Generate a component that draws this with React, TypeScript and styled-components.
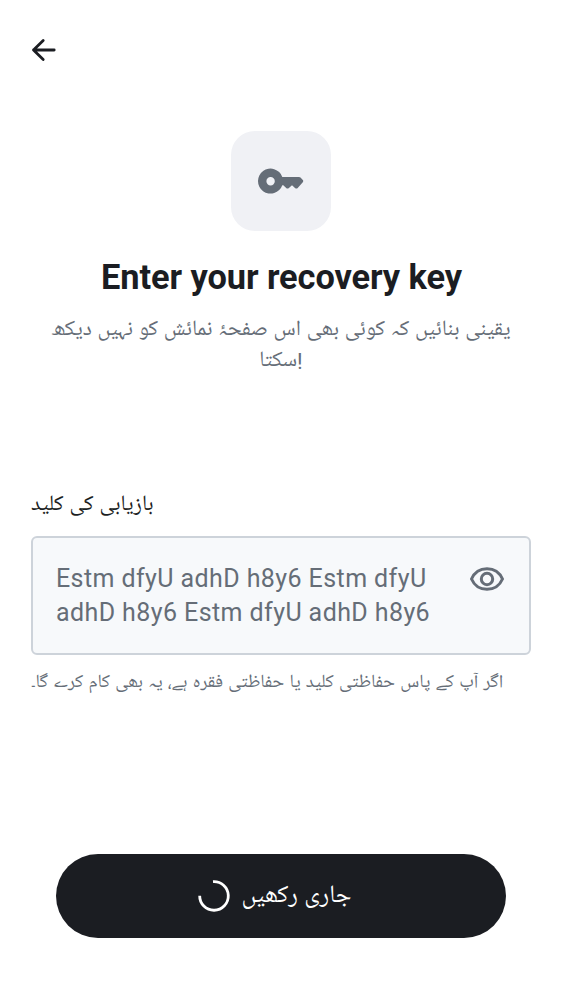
import React from 'react';
import styled, { createGlobalStyle } from 'styled-components';

const urduFont = 'Roboto, "Noto Naskh Arabic UI", "Noto Naskh Arabic", "Noto Sans Arabic", "DejaVu Sans", sans-serif';

const Global = createGlobalStyle`
  * { box-sizing: border-box; }
  body { margin: 0; background: #fff; font-family: ${urduFont}; color: #1b1d22; }
  h1, p { margin: 0; }
`;
const Screen = styled.main`
  width: 562px; height: 1000px; display: flex; flex-direction: column; overflow: hidden; padding: 33px 31px 0;
`;
const Back = styled.button`
  border: 0; background: none; padding: 0; width: 33px; height: 33px; display: flex; margin-left: -4px;
`;
const Header = styled.header`
  display: flex; flex-direction: column; align-items: center; margin-top: 65px; height: 360px;
`;
const KeyTile = styled.div`
  width: 100px; height: 100px; border-radius: 24px; background: #f0f1f5; display: grid; place-items: center;
`;
const Title = styled.h1`
  font-size: 34.375px; line-height: 44px; letter-spacing: -0.08px; margin-top: 24px; padding-left: 1px; font-weight: 700; white-space: nowrap;
`;
const Subtitle = styled.p`
  font-size: 21.875px; word-spacing: 0.35px; line-height: 31.25px; margin-top: 16px; color: #656d77; text-align: center; white-space: nowrap;
`;
const Label = styled.label`
  font-size: 21.875px; word-spacing: 0.4px; line-height: 30px; height: 45px; white-space: nowrap;
`;
const Field = styled.div`
  height: 119px; border: 2px solid #cdd3da; border-radius: 6px; background: #f7f9fb;
  display: flex; justify-content: space-between; padding: 24px 24px 0 23px; color: #656d77;
`;
const KeyText = styled.div`
  font-size: 25px; line-height: 34px; letter-spacing: 0.41px; white-space: nowrap;
`;
const Hint = styled.p`
  font-size: 18.75px; word-spacing: 0.58px; line-height: 26px; margin-top: 16px; color: #656d77; white-space: nowrap;
`;
const Button = styled.button`
  width: 450px; height: 83.5px; border: 0; border-radius: 42px; background: #1b1d22; color: #fff; margin: 157px auto 0;
  display: flex; align-items: center; justify-content: center; gap: 10px; padding: 0 13px 0 0;
  font: 400 25px ${urduFont};
`;
const ButtonText = styled.span`
  line-height: 30px; margin-top: 2px;
`;

export default function App() {
  return (
    <>
      <Global />
      <Screen>
        <Back aria-label="Back">
          <svg width="33" height="33" viewBox="0 0 33 33" fill="none" stroke="#1b1d22" strokeWidth="2.800" strokeLinecap="round" strokeLinejoin="round"><path d="M27.200 17H6.500M16.200 7.500 6.500 17l9.700 9.500" /></svg>
        </Back>
        <Header>
          <KeyTile>
            <svg width="50" height="50" viewBox="0 0 50 50" fill="#656d77"><path fillRule="evenodd" d="M26.300 21H43Q43.900 21 44.500 21.600L46.800 24Q47.700 25.100 46.800 26.200L41.700 31.900Q40.500 33.200 39 32L36 29.200 32.900 32Q31.400 33.200 30.200 32L27.300 29.200H26.300A12.500 12.500 0 1 1 26.300 21ZM14.600 29.400a4.200 4.200 0 1 0 0-8.400 4.200 4.200 0 0 0 0 8.400Z" /></svg>
          </KeyTile>
          <Title>Enter your recovery key</Title>
          <Subtitle>یقینی بنائیں کہ کوئی بھی اس صفحۂ نمائش کو نہیں دیکھ<br />سکتا!</Subtitle>
        </Header>
        <Label>بازیابی کی کلید</Label>
        <Field>
          <KeyText>Estm dfyU adhD h8y6 Estm dfyU<br />adhD h8y6 Estm dfyU adhD h8y6</KeyText>
          <svg width="36" height="34" viewBox="0 0 36 34" fill="none" stroke="#656d77" strokeWidth="3"><path d="M2.500 17C5.500 10.200 11 6.700 18 6.700S30.500 10.200 33.500 17C30.500 23.800 25 27.300 18 27.300S5.500 23.800 2.500 17Z" /><circle cx="18" cy="17" r="5.700" /></svg>
        </Field>
        <Hint>اگر آپ کے پاس حفاظتی کلید یا حفاظتی فقرہ ہے، یہ بھی کام کرے گا۔</Hint>
        <Button>
          <svg width="34" height="34" viewBox="0 0 34 34" fill="none" stroke="#fff" strokeWidth="2.800"><path d="M16 2.700a14.300 14.300 0 1 1-13.300 14" /></svg>
          <ButtonText>جاری رکھیں</ButtonText>
        </Button>
      </Screen>
    </>
  );
}
